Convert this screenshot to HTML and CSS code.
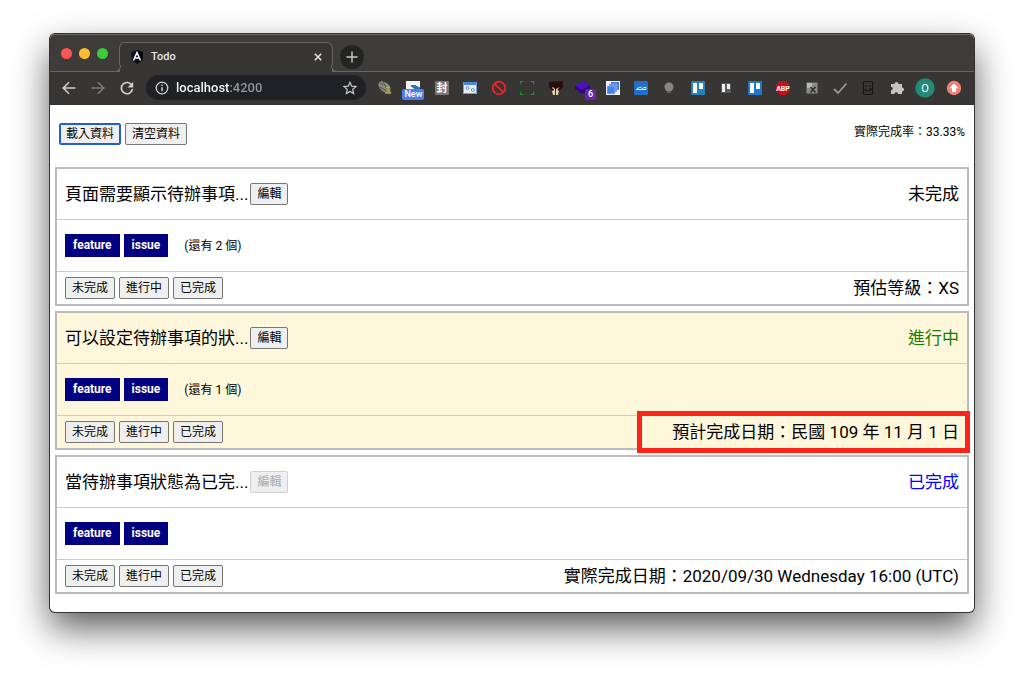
FILE: index.html
```html
<!DOCTYPE html>
<html lang="zh-TW">
<head>
    <meta charset="UTF-8">
    <meta name="viewport" content="width=device-width, initial-scale=1.0">
    <title>Todo</title>
    <link rel="stylesheet" href="styles.css">
</head>
<body>
    <div class="window">
        <div class="tab-bar">
            <div class="lights">
                <span class="light red"></span>
                <span class="light yellow"></span>
                <span class="light green"></span>
            </div>
            <div class="tab">
                <svg class="favicon" viewBox="0 0 16 16"><path d="M8 0l7 2.500-1 9.500-6 4-6-4-1-9.500z" fill="#10141f"/><path d="M8 0l7 2.500-1 9.500-6 4z" fill="#05070d"/><path d="M4 12l4-9 4 9M5.600 9.200h4.800" fill="none" stroke="#fff" stroke-width="1.700"/></svg>
                <span class="tab-title">Todo</span>
                <button class="icon-button tab-close" aria-label="關閉分頁"><svg width="8" height="8" viewBox="0 0 8 8"><path d="M.8.8l6.400 6.400M7.200.8L.8 7.200" stroke="#e4e4e4" stroke-width="1.600"/></svg></button>
            </div>
            <button class="icon-button new-tab" aria-label="新增分頁"><svg width="12" height="12" viewBox="0 0 12 12"><path d="M6 .5v11M.5 6h11" stroke="#c4c4c4" stroke-width="1.500"/></svg></button>
        </div>

        <div class="toolbar">
            <div class="nav">
                <button class="icon-button" aria-label="上一頁"><svg width="14" height="14" viewBox="0 0 14 14"><path d="M13.500 7H1.500M7 1.200L1.200 7 7 12.800" fill="none" stroke="#d0d0d0" stroke-width="1.600"/></svg></button>
                <button class="icon-button" aria-label="下一頁"><svg width="14" height="14" viewBox="0 0 14 14"><path d="M.5 7h12M7 1.200L12.800 7 7 12.800" fill="none" stroke="#7b7a79" stroke-width="1.600"/></svg></button>
                <button class="icon-button" aria-label="重新載入"><svg width="14" height="14" viewBox="0 0 14 14"><path d="M11.800 4.200A5.600 5.600 0 1 0 12.500 8.200" fill="none" stroke="#d0d0d0" stroke-width="1.700"/><path d="M13.200.8v5.600H7.600z" fill="#d0d0d0"/></svg></button>
            </div>
            <div class="address">
                <svg width="14" height="14" viewBox="0 0 14 14"><circle cx="7" cy="7" r="5.800" fill="none" stroke="#d4d4d4" stroke-width="1.300"/><path d="M7 6.200v4M7 3.500v1.500" stroke="#d4d4d4" stroke-width="1.500"/></svg>
                <input class="url" type="text" value="localhost:4200" aria-label="網址">
                <button class="icon-button" aria-label="加入書籤"><svg width="14" height="14" viewBox="0 0 14 14"><path d="M7 1.300l1.700 3.900 4.200.4-3.200 2.800 1 4.200L7 10.400l-3.700 2.200 1-4.200L1.100 5.600l4.200-.4z" fill="none" stroke="#c8c8c8" stroke-width="1.200"/></svg></button>
            </div>
            <div class="extensions">
                <svg class="ext" viewBox="0 0 20 20"><ellipse cx="9.500" cy="9" rx="7" ry="4.500" transform="rotate(40 9.500 9)" fill="#8a8c7c"/><path d="M5 5l3 2M8 4l4 7M5 9l7 4" stroke="#4f5148"/><path d="M11 10l4-1M10 15l6 0M12 12l4 3" stroke="#b3a942" stroke-width="1.500"/></svg>
                <span class="ext-wrap">
                    <svg class="ext" viewBox="0 0 20 20"><path d="M3 3h14v14H3z" fill="#f4f7fa"/><path d="M17 4.500v2.500H9q-2.500 0-1 1.500l5 3.500H17v-2.500l-5-2.500h5z" fill="#2779b5"/></svg>
                    <span class="badge badge-new">New</span>
                </span>
                <svg class="ext" viewBox="0 0 20 20"><rect x="3" y="3" width="14" height="14" rx="1" fill="#767676"/><text class="ext-cjk" x="10" y="14" text-anchor="middle" fill="#fff">封</text></svg>
                <svg class="ext" viewBox="0 0 20 20"><rect x="3" y="5" width="14" height="11" fill="#e4edf8"/><path d="M3 4h14v3H3z" fill="#4c86d8"/><path d="M3.500 4.500v11h13v-11" fill="none" stroke="#6f9fdf"/><circle cx="7.500" cy="10" r="1.500" fill="none" stroke="#6d93c8"/><circle cx="12.800" cy="12" r="1.500" fill="none" stroke="#6d93c8"/></svg>
                <svg class="ext" viewBox="0 0 20 20"><circle cx="10" cy="10" r="6.200" fill="none" stroke="#e5252b" stroke-width="2"/><path d="M5.600 5.600l8.800 8.800" stroke="#e5252b" stroke-width="2"/></svg>
                <svg class="ext" viewBox="0 0 20 20"><path d="M3.500 6V3.500H6M14 3.500h2.500V6M16.500 14v2.500H14M6 16.500H3.500V14" fill="none" stroke="#2f8a2b" stroke-width="1.200"/><path d="M9 3.500h2M9 16.500h2M3.500 9v2M16.500 9v2" stroke="#2b4c29"/></svg>
                <svg class="ext" viewBox="0 0 20 20"><path d="M3 4l14-1v6l-3 3H6L3 9z" fill="#2b0e0c"/><path d="M6 10q4 2 0 3l1 4h2v-6l-2-2zM14 9q-4 3-1 4l-1 4h-2v-6z" fill="#e5cfaa"/></svg>
                <span class="ext-wrap">
                    <svg class="ext" viewBox="0 0 20 20"><path d="M9 3l7 4-8 5-7-4z" fill="#4d10bd"/><path d="M1 8l7 4 8-5v4l-8 5-7-5z" fill="#300886"/></svg>
                    <span class="badge badge-count">6</span>
                </span>
                <svg class="ext" viewBox="0 0 20 20"><path d="M3 3h14v14H3z" fill="#f3f6fb"/><path d="M8 4h8v8H8z" fill="#3c78d8"/><path d="M6 6h8v8H6z" fill="#4a86e8" stroke="#b8cff4" stroke-width=".6"/><path d="M4 8h8v8H4z" fill="#4584e8" stroke="#b8cff4" stroke-width=".6"/></svg>
                <svg class="ext" viewBox="0 0 20 20"><rect x="3" y="3" width="14" height="14" rx="1.500" fill="#226fcb"/><path d="M5 11.500h10V9l-3.500 1.200-1 1M6 10.500l4.500-1.500" fill="none" stroke="#dbe9fa"/></svg>
                <svg class="ext" viewBox="0 0 20 20"><circle cx="10" cy="9" r="4.500" fill="#858585"/><path d="M8 13h4v2H8z" fill="#646464"/></svg>
                <svg class="ext" viewBox="0 0 20 20"><rect x="3" y="3" width="14" height="14" rx="1" fill="#2880ba"/><path d="M5 5h4v10H5zM11 5h4v6h-4z" fill="#fff"/></svg>
                <svg class="ext" viewBox="0 0 20 20"><rect x="5" y="5" width="10" height="10" fill="#5c5c5c"/><path d="M6 6h3v8H6zM11 6h3v5h-3z" fill="#f0f0f0"/></svg>
                <svg class="ext" viewBox="0 0 20 20"><rect x="3" y="3" width="14" height="14" rx="1" fill="#2176ce"/><path d="M5 5h4v10H5zM11 5h4v6h-4z" fill="#fff"/></svg>
                <svg class="ext" viewBox="0 0 20 20"><path d="M7 3h6l4 4v6l-4 4H7l-4-4V7z" fill="#c70d20"/><text class="ext-abp" x="10" y="12.500" text-anchor="middle" fill="#fff">ABP</text></svg>
                <svg class="ext" viewBox="0 0 20 20"><rect x="4.500" y="4.500" width="11" height="11" fill="#8b8b8b"/><path d="M5 5h5v5H5z" fill="#bababa"/><path d="M8.500 9l5 5.500m0-5.500l-5 5.500" stroke="#303030" stroke-width="1.600"/></svg>
                <svg class="ext" viewBox="0 0 20 20"><path d="M4 11l4 4 8.500-9.500" fill="none" stroke="#989898" stroke-width="1.800"/></svg>
                <svg class="ext" viewBox="0 0 20 20"><rect x="5.500" y="3.500" width="9" height="13" fill="none" stroke="#171717"/><path d="M8 7v2M12 7v2M6.500 11q3.500 4 6.500 0M12 10l2 2" fill="none" stroke="#171717" stroke-width="1.200"/></svg>
                <svg class="ext" viewBox="0 0 20 20"><path d="M4 6h3.500a2 2 0 1 1 4 0H15v3.500a2 2 0 1 1 0 4V16h-4a1.800 1.800 0 0 0-3.600 0H4v-3.600a1.800 1.800 0 0 0 0-3.600z" fill="#c4c4c4"/></svg>
                <svg class="ext" viewBox="0 0 20 20"><circle cx="10" cy="10" r="9.700" fill="#25897a"/><text class="ext-user" x="10" y="14" text-anchor="middle" fill="#fff">O</text></svg>
                <svg class="ext" viewBox="0 0 20 20"><circle cx="10" cy="10" r="7.200" fill="#ef8177"/><path d="M10 5.500l4.500 4.700H12V14H8v-3.800H5.500z" fill="#fff"/></svg>
            </div>
        </div>

        <main class="page">
            <div class="actions">
                <div class="buttons">
                    <button class="btn focused">載入資料</button>
                    <button class="btn">清空資料</button>
                </div>
                <span class="rate">實際完成率：33.33%</span>
            </div>

            <div class="todo-list">
                <section class="todo">
                    <div class="todo-header">
                        <span class="subject">頁面需要顯示待辦事項...</span>
                        <button class="btn">編輯</button>
                        <span class="status">未完成</span>
                    </div>
                    <div class="todo-tags">
                        <span class="tag">feature</span>
                        <span class="tag">issue</span>
                        <span class="more">(還有 2 個)</span>
                    </div>
                    <div class="todo-footer">
                        <div class="buttons">
                            <button class="btn">未完成</button>
                            <button class="btn">進行中</button>
                            <button class="btn">已完成</button>
                        </div>
                        <span class="info">預估等級：XS</span>
                    </div>
                </section>

                <section class="todo doing">
                    <div class="todo-header">
                        <span class="subject">可以設定待辦事項的狀...</span>
                        <button class="btn">編輯</button>
                        <span class="status">進行中</span>
                    </div>
                    <div class="todo-tags">
                        <span class="tag">feature</span>
                        <span class="tag">issue</span>
                        <span class="more">(還有 1 個)</span>
                    </div>
                    <div class="todo-footer">
                        <div class="buttons">
                            <button class="btn">未完成</button>
                            <button class="btn">進行中</button>
                            <button class="btn">已完成</button>
                        </div>
                        <span class="info marked">預計完成日期：民國 109 年 11 月 1 日</span>
                    </div>
                </section>

                <section class="todo done">
                    <div class="todo-header">
                        <span class="subject">當待辦事項狀態為已完...</span>
                        <button class="btn" disabled>編輯</button>
                        <span class="status">已完成</span>
                    </div>
                    <div class="todo-tags">
                        <span class="tag">feature</span>
                        <span class="tag">issue</span>
                    </div>
                    <div class="todo-footer">
                        <div class="buttons">
                            <button class="btn">未完成</button>
                            <button class="btn">進行中</button>
                            <button class="btn">已完成</button>
                        </div>
                        <span class="info">實際完成日期：2020/09/30 Wednesday 16:00 (UTC)</span>
                    </div>
                </section>
            </div>
        </main>
    </div>
</body>
</html>
```
FILE: styles.css
```css
* {
    box-sizing: border-box;
}
body {
    margin: 0;
    padding: 34px 50px 64px;
    background: #fff;
    color: #000;
    font-family: Roboto, "Noto Sans CJK TC", sans-serif;
    font-size: 17px;
    line-height: 24px;
}
button,
input {
    font-family: inherit;
}
svg {
    display: block;
    flex: none;
}

/* browser window */
.window {
    border-radius: 5px;
    background: #fff;
    box-shadow: 0 0 0 1px #333, 0 16px 36px rgba(0, 0, 0, 0.65);
}
.tab-bar {
    display: flex;
    align-items: flex-end;
    height: 38px;
    padding-left: 11px;
    border-radius: 5px 5px 0 0;
    border-top: 1px solid #6a6967;
    border-bottom: 1px solid #686765;
    background: #3d3c3a;
}
.lights {
    display: flex;
    gap: 7px;
    padding-bottom: 12px;
}
.light {
    width: 11px;
    height: 11px;
    border-radius: 50%;
}
.red {
    background: #fc5753;
}
.yellow {
    background: #fdbc31;
}
.green {
    background: #3ecb3b;
}
.tab {
    position: relative;
    display: flex;
    align-items: center;
    width: 214px;
    height: 30px;
    margin: 0 7px -1px 11px;
    padding: 0 9px 2px 10px;
    border: 1px solid #686765;
    border-bottom: 0;
    border-radius: 6px 6px 0 0;
    background: #373634;
}
/* curved feet of the active tab */
.tab::before,
.tab::after {
    content: "";
    position: absolute;
    bottom: 0;
    width: 6px;
    height: 6px;
    border-bottom: 1px solid #686765;
    background: #3d3c3a;
}
.tab::before {
    left: -6px;
    border-right: 1px solid #686765;
    border-bottom-right-radius: 6px;
}
.tab::after {
    right: -6px;
    border-left: 1px solid #686765;
    border-bottom-left-radius: 6px;
}
.favicon {
    width: 14px;
    height: 14px;
}
.tab-title {
    flex: 1;
    margin-left: 7px;
    color: #e6e6e6;
    font-size: 11px;
    font-weight: 500;
}
.icon-button {
    display: flex;
    align-items: center;
    justify-content: center;
    padding: 0;
    border: 0;
    background: none;
}
.tab-close {
    width: 10px;
    height: 10px;
}
.new-tab {
    width: 24px;
    height: 24px;
    margin-bottom: 2px;
    border-radius: 50%;
    background: #242423;
}
.toolbar {
    display: flex;
    align-items: center;
    height: 33px;
    padding: 0 10px 2px 12px;
    background: #373634;
}
.nav {
    display: flex;
    gap: 15px;
}
.address {
    display: flex;
    align-items: center;
    width: 220px;
    height: 25px;
    margin: 0 9px 0 12px;
    padding: 0 9px;
    border-radius: 13px;
    background: #202124;
}
/* host in white, port dimmed */
.url {
    flex: 1;
    min-width: 0;
    margin-left: 7px;
    padding: 0;
    border: 0;
    outline: 0;
    background: linear-gradient(to right, #fff 54px, #96989b 54px);
    -webkit-background-clip: text;
    background-clip: text;
    color: transparent;
    font-size: 13px;
    font-weight: 500;
    line-height: 18px;
}
.extensions {
    display: flex;
    flex: 1;
    justify-content: space-between;
}
.ext {
    width: 20px;
    height: 20px;
}
.ext-wrap {
    position: relative;
}
.ext-cjk {
    font-size: 11px;
    font-weight: bold;
}
.ext-abp {
    font-size: 7px;
    font-weight: bold;
}
.ext-user {
    font-size: 11px;
}
.badge {
    position: absolute;
    border-radius: 2px;
    color: #fff;
    font-size: 9px;
    font-weight: 500;
    line-height: 11px;
    text-align: center;
}
.badge-new {
    left: -1px;
    top: 11px;
    width: 22px;
    background: #4a80ee;
}
.badge-count {
    left: 11px;
    top: 11px;
    width: 11px;
    background: #6425b4;
}

/* todo page */
.page {
    padding: 18px 5px;
}
.actions {
    display: flex;
    align-items: flex-start;
    justify-content: space-between;
    padding: 0 4px 22px;
}
.buttons {
    display: flex;
    gap: 4px;
}
.btn {
    height: 22px;
    padding: 0 6px;
    border: 1px solid #767676;
    border-radius: 2px;
    background: #efefef;
    color: #000;
    font-size: 12px;
    line-height: 18px;
    white-space: nowrap;
}
.btn:disabled {
    border-color: #cfcfcf;
    color: #aaa;
}
.focused {
    border-color: #1f5fd6;
    box-shadow: inset 0 0 0 1px #1f5fd6;
}
.rate {
    font-size: 12px;
    line-height: 18px;
}
.todo-list {
    display: flex;
    flex-direction: column;
    gap: 5px;
}
.todo {
    border: 2px solid #bbb;
}
.todo-header,
.todo-tags,
.todo-footer {
    display: flex;
    align-items: center;
    gap: 4px;
    padding: 0 8px;
}
.todo-header {
    gap: 2px;
    min-height: 51px;
    border-bottom: 1px solid #ccc;
}
.todo-tags {
    min-height: 52px;
    border-bottom: 1px solid #ccc;
}
.todo-footer {
    justify-content: space-between;
    min-height: 32px;
}
.status {
    margin-left: auto;
}
.doing {
    background: #fff7dc;
}
.doing .status {
    color: #148000;
}
.done .status {
    color: #00f;
}
.tag {
    padding: 0 8px;
    background: #000080;
    color: #fff;
    font-size: 12px;
    font-weight: bold;
    line-height: 23px;
}
.more {
    margin-left: 12px;
    font-size: 12px;
}
.marked {
    position: relative;
}
.marked::after {
    content: "";
    position: absolute;
    inset: -9px -11px -9px -35px;
    border: 5px solid #fc2419;
}
```
